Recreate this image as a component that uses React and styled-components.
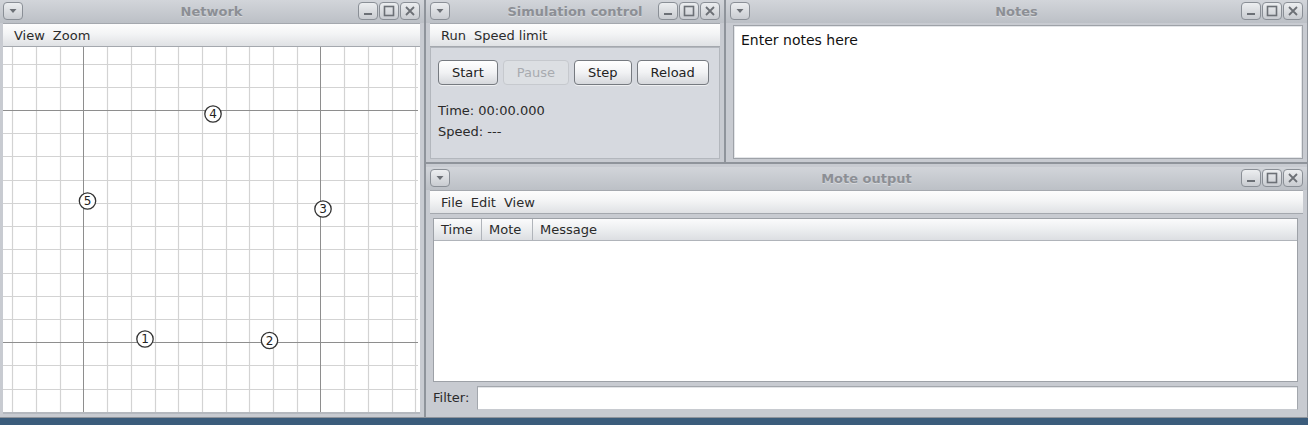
import React from 'react';
import styled, { createGlobalStyle } from 'styled-components';

const Global = createGlobalStyle`
  html, body { margin: 0; padding: 0; background: #3b5c7b; }
  body { font-family: "DejaVu Sans", "Noto Sans", sans-serif; font-size: 13px; color: #222; }
  * { box-sizing: border-box; }
`;

const Desktop = styled.div`
  width: 1308px;
  height: 425px;
  background: #3b5c7b;
  display: grid;
  grid-template-columns: 425px 883px;
  grid-template-rows: 418px;
  align-content: start;
  overflow: hidden;
`;

const RightCol = styled.div`
  display: grid;
  grid-template-rows: 163px 255px;
  min-width: 0;
`;

const TopRow = styled.div`
  display: grid;
  grid-template-columns: 300px 583px;
  min-width: 0;
`;

const Frame = styled.div`
  display: flex;
  flex-direction: column;
  min-width: 0;
  min-height: 0;
  background: #c8cbd1;
  border: 1px solid #8f949b;
  border-top-width: ${p => (p.$topRow ? 0 : 1)}px;
  border-left-width: ${p => (p.$clipped ? 0 : 1)}px;
  padding: ${p => (p.$topRow ? 0 : 3)}px 4px ${p => (p.$topRow ? 3 : 4)}px ${p => (p.$clipped ? 3 : 4)}px;
`;

const TitleBar = styled.div`
  flex: none;
  height: 23px;
  display: grid;
  grid-template-columns: 1fr auto 1fr;
  align-items: center;
  margin: 0 -4px 0 ${p => (p.$clipped ? -3 : -4)}px;
  padding: 0 4px 1px ${p => (p.$clipped ? 3 : 4)}px;
  background: linear-gradient(#d2d5da, #bcc0c6);
`;

const Title = styled.div`
  font-weight: bold;
  font-size: 13px;
  color: #8c8f95;
  text-shadow: 0 1px 0 rgba(255, 255, 255, 0.35);
  white-space: nowrap;
`;

const Ctrls = styled.div`
  justify-self: end;
  display: flex;
  gap: 1px;
`;

const TBtn = styled.div`
  justify-self: start;
  width: 20px;
  height: 18px;
  border: 1px solid #8a8f96;
  border-radius: 4px;
  background: linear-gradient(#eceef0, #c9ccd1);
  display: flex;
  align-items: center;
  justify-content: center;
  color: #6a6e74;
`;

const MenuBar = styled.div`
  flex: none;
  height: 24px;
  display: flex;
  align-items: center;
  padding-left: 7px;
  background: linear-gradient(#fdfdfd, #f3f4f5 45%, #dfe1e4);
  border-top: 1px solid #a4a8ae;
  border-bottom: 1px solid #a4a8ae;
`;

const MenuItem = styled.span`
  padding: 0 4px;
  color: #2b2b2b;
`;

const Canvas = styled.div`
  flex: 1;
  min-height: 0;
  background: #fff;
  border-bottom: 2px solid #b4b8be;
  overflow: hidden;
`;

const Panel = styled.div`
  flex: 1;
  background: #d6d9df;
  border: 1px solid #b3b7bd;
  padding: 12px 0 0 7px;
  display: flex;
  flex-direction: column;
`;

const BtnRow = styled.div`
  display: flex;
  gap: 5px;
  margin-bottom: 15px;
`;

const Button = styled.div`
  height: 25px;
  padding: 0 13px;
  display: flex;
  align-items: center;
  border-radius: 4px;
  border: 1px solid ${p => (p.$disabled ? '#c6c9ce' : '#767a80')};
  background: ${p => (p.$disabled ? '#dcdfe3' : 'linear-gradient(#ffffff, #f1f2f4 50%, #d6d8dc)')};
  color: ${p => (p.$disabled ? '#a8abb0' : '#222')};
  box-shadow: ${p => (p.$disabled ? 'none' : '0 1px 0 rgba(255,255,255,0.6)')};
`;

const InfoLine = styled.div`
  height: 21px;
  line-height: 21px;
  color: #2a2a2a;
`;

const NotesArea = styled.div`
  flex: 1;
  margin: 2px 0 0 3px;
  background: #fff;
  border: 1px solid #9ea2a8;
  box-shadow: inset 0 0 0 1px #e4e6e9;
  padding: 6px 7px;
  font-size: 14px;
  color: #111;
`;

const MoteBody = styled.div`
  flex: 1;
  display: flex;
  flex-direction: column;
  padding: 4px 5px 0 3px;
  min-height: 0;
`;

const Table = styled.div`
  flex: 1;
  display: flex;
  flex-direction: column;
  background: #fff;
  border: 1px solid #9da1a7;
`;

const HeaderRow = styled.div`
  display: grid;
  grid-template-columns: 48px 51px 1fr;
  height: 22px;
  background: linear-gradient(#fbfbfc, #eceef0 50%, #dcdee2);
  border-bottom: 1px solid #b0b4ba;
`;

const HeaderCell = styled.div`
  display: flex;
  align-items: center;
  padding-left: 7px;
  border-right: 1px solid #b0b4ba;
  color: #2a2a2a;
  &:last-child { border-right: none; }
`;

const FilterRow = styled.div`
  flex: none;
  height: 31px;
  display: flex;
  align-items: center;
  gap: 8px;
`;

const FilterLabel = styled.span`
  color: #2a2a2a;
`;

const FilterField = styled.div`
  flex: 1;
  height: 24px;
  background: #fff;
  border: 1px solid #a3a7ad;
  border-bottom-color: #c8cbd0;
  box-shadow: inset 0 1px 0 #e2e4e7;
`;

function DownBtn() {
  return (
    <TBtn>
      <svg width="8" height="6" viewBox="0 0 8 6"><path d="M0.5 1 L7.5 1 L4 5 Z" fill="#6c7076" /></svg>
    </TBtn>
  );
}

function WinCtrls() {
  return (
    <Ctrls>
      <TBtn>
        <svg width="12" height="12" viewBox="0 0 12 12"><rect x="2" y="8" width="8" height="2" fill="#6c7076" /></svg>
      </TBtn>
      <TBtn>
        <svg width="12" height="12" viewBox="0 0 12 12"><rect x="1.5" y="1.5" width="9" height="9" fill="none" stroke="#6c7076" strokeWidth="1.6" /></svg>
      </TBtn>
      <TBtn>
        <svg width="12" height="12" viewBox="0 0 12 12"><path d="M2 2 L10 10 M10 2 L2 10" stroke="#6c7076" strokeWidth="1.8" /></svg>
      </TBtn>
    </Ctrls>
  );
}

function Window({ title, clipped, topRow, children }) {
  return (
    <Frame $clipped={clipped} $topRow={topRow}>
      <TitleBar $clipped={clipped}>
        <DownBtn />
        <Title>{title}</Title>
        <WinCtrls />
      </TitleBar>
      {children}
    </Frame>
  );
}

const motes = [
  { id: 1, x: 142, y: 292 },
  { id: 2, x: 266.5, y: 293.5 },
  { id: 3, x: 320, y: 162 },
  { id: 4, x: 210, y: 67 },
  { id: 5, x: 84.5, y: 154 },
];

function Grid() {
  const W = 415;
  const H = 366;
  const vs = [];
  for (let k = 0; k < 18; k++) {
    const x = Math.round(9.3 + k * 23.7) + 0.5;
    vs.push({ x, dark: k === 3 || k === 13 });
  }
  const hs = [];
  for (let k = 0; k < 16; k++) {
    const y = Math.round(16.5 + k * 23.23) + 0.5;
    hs.push({ y, dark: k === 2 || k === 12 });
  }
  return (
    <svg width={W} height={H} style={{ display: 'block' }}>
      {vs.filter(v => !v.dark).map(v => (
        <line key={'v' + v.x} x1={v.x} y1={0} x2={v.x} y2={H} stroke="#d3d3d3" strokeWidth="1.2" />
      ))}
      {hs.filter(h => !h.dark).map(h => (
        <line key={'h' + h.y} x1={0} y1={h.y} x2={W} y2={h.y} stroke="#d3d3d3" strokeWidth="1.2" />
      ))}
      {vs.filter(v => v.dark).map(v => (
        <line key={'dv' + v.x} x1={v.x} y1={0} x2={v.x} y2={H} stroke="#8e8e8e" strokeWidth="1" />
      ))}
      {hs.filter(h => h.dark).map(h => (
        <line key={'dh' + h.y} x1={0} y1={h.y} x2={W} y2={h.y} stroke="#8e8e8e" strokeWidth="1" />
      ))}
      {motes.map(m => (
        <g key={m.id}>
          <circle cx={m.x} cy={m.y} r="8.2" fill="#fff" stroke="#333" strokeWidth="1.3" />
          <text x={m.x} y={m.y + 4.3} textAnchor="middle" fontSize="12" fontFamily="DejaVu Sans, sans-serif" fill="#222">{m.id}</text>
        </g>
      ))}
    </svg>
  );
}

export default function App() {
  return (
    <>
      <Global />
      <Desktop>
        <Window title="Network" clipped topRow>
          <MenuBar>
            <MenuItem>View</MenuItem>
            <MenuItem>Zoom</MenuItem>
          </MenuBar>
          <Canvas>
            <Grid />
          </Canvas>
        </Window>
        <RightCol>
          <TopRow>
            <Window title="Simulation control" topRow>
              <MenuBar>
                <MenuItem>Run</MenuItem>
                <MenuItem>Speed limit</MenuItem>
              </MenuBar>
              <Panel>
                <BtnRow>
                  <Button>Start</Button>
                  <Button $disabled>Pause</Button>
                  <Button>Step</Button>
                  <Button>Reload</Button>
                </BtnRow>
                <InfoLine>Time: 00:00.000</InfoLine>
                <InfoLine>Speed: ---</InfoLine>
              </Panel>
            </Window>
            <Window title="Notes" topRow>
              <NotesArea>Enter notes here</NotesArea>
            </Window>
          </TopRow>
          <Window title="Mote output">
            <MenuBar>
              <MenuItem>File</MenuItem>
              <MenuItem>Edit</MenuItem>
              <MenuItem>View</MenuItem>
            </MenuBar>
            <MoteBody>
              <Table>
                <HeaderRow>
                  <HeaderCell>Time</HeaderCell>
                  <HeaderCell>Mote</HeaderCell>
                  <HeaderCell>Message</HeaderCell>
                </HeaderRow>
              </Table>
              <FilterRow>
                <FilterLabel>Filter:</FilterLabel>
                <FilterField />
              </FilterRow>
            </MoteBody>
          </Window>
        </RightCol>
      </Desktop>
    </>
  );
}
